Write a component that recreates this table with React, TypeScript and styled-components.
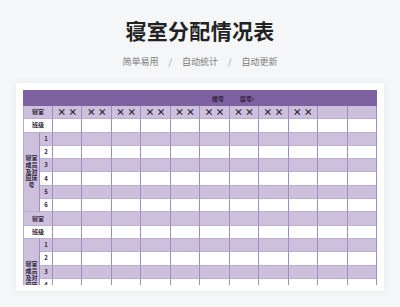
import React from "react";
import styled, { createGlobalStyle } from "styled-components";

const GlobalStyle = createGlobalStyle`
  html, body {
    margin: 0;
    padding: 0;
    background: #f5f6f8;
    font-family: "Noto Sans CJK SC", "Noto Sans", "Liberation Sans", sans-serif;
  }
  * { box-sizing: border-box; }
`;

const Page = styled.div`
  width: 400px;
  height: 307px;
  overflow: hidden;
  display: flex;
  flex-direction: column;
  align-items: center;
`;

const Title = styled.h1`
  margin: 18px 0 0;
  font-size: 21px;
  line-height: 24px;
  font-weight: 700;
  color: #222222;
  letter-spacing: 0.3px;
`;

const Subtitle = styled.div`
  margin-top: 14px;
  height: 12px;
  display: flex;
  align-items: center;
  gap: 10px;
  font-size: 9px;
  line-height: 12px;
  color: #7a7a7a;
`;

const Sep = styled.span`
  color: #9a9a9a;
`;

const Card = styled.div`
  margin-top: 15px;
  width: 368px;
  background: #ffffff;
  padding: 7px 7px 6px;
  box-shadow: 0 0 6px rgba(40, 40, 60, 0.07);
`;

const TableClip = styled.div`
  height: 195px;
  overflow: hidden;
`;

const HeaderBar = styled.div`
  height: 16px;
  background: #7e61a1;
  display: flex;
  align-items: center;
  padding-left: 189px;
  gap: 16px;
  font-size: 6px;
  font-weight: 700;
  color: #2b2038;
`;

const Grid = styled.div`
  display: grid;
  grid-template-columns: 16px 13px repeat(11, 1fr);
  grid-auto-rows: 13.3px;
  border-left: 1px solid #b9aacd;
`;

type Tone = "purple" | "white";

const Cell = styled.div<{ $tone: Tone; $span?: number; $rows?: number; $big?: boolean }>`
  grid-column: span ${(p) => p.$span ?? 1};
  grid-row: span ${(p) => p.$rows ?? 1};
  background: ${(p) => (p.$tone === "purple" ? "#cdc0dd" : "#ffffff")};
  border-right: 1px solid #a08cbe;
  border-bottom: 1px solid #bcaed0;
  display: flex;
  align-items: center;
  justify-content: center;
  font-size: ${(p) => (p.$big ? "9px" : "6px")};
  font-weight: ${(p) => (p.$big ? 900 : 700)};
  color: #2e2638;
  line-height: 1;
  white-space: nowrap;
`;

const LabelText = styled.div`
  display: flex;
  flex-direction: column;
  align-items: center;
  font-size: 6px;
  font-weight: 700;
  color: #2e2638;
`;

const LabelLine = styled.span`
  display: block;
  height: 6.8px;
  line-height: 6.8px;
  white-space: nowrap;
`;

const COLS = 11;
const LABEL_LINES = ["寝室", "成员", "及对", "应床", "号"];

function Block({ marks }: { marks: boolean }) {
  const cells: React.ReactNode[] = [];
  cells.push(
    <Cell key="dorm" $tone="purple" $span={2}>
      寝室
    </Cell>
  );
  for (let i = 0; i < COLS; i++) {
    cells.push(
      <Cell key={`d${i}`} $tone="purple" $big>
        {marks && i < 9 ? "× ×" : ""}
      </Cell>
    );
  }
  cells.push(
    <Cell key="cls" $tone="white" $span={2}>
      班级
    </Cell>
  );
  for (let i = 0; i < COLS; i++) {
    cells.push(<Cell key={`c${i}`} $tone="white" />);
  }
  cells.push(
    <Cell key="label" $tone="purple" $rows={6}>
      <LabelText>
        {LABEL_LINES.map((l) => (
          <LabelLine key={l}>{l}</LabelLine>
        ))}
      </LabelText>
    </Cell>
  );
  for (let r = 1; r <= 6; r++) {
    const tone: Tone = r % 2 === 1 ? "purple" : "white";
    cells.push(
      <Cell key={`n${r}`} $tone={tone}>
        {r}
      </Cell>
    );
    for (let i = 0; i < COLS; i++) {
      cells.push(<Cell key={`m${r}-${i}`} $tone={tone} />);
    }
  }
  return <>{cells}</>;
}

export default function App() {
  return (
    <Page>
      <GlobalStyle />
      <Title>寝室分配情况表</Title>
      <Subtitle>
        <span>简单易用</span>
        <Sep>/</Sep>
        <span>自动统计</span>
        <Sep>/</Sep>
        <span>自动更新</span>
      </Subtitle>
      <Card>
        <TableClip>
          <HeaderBar>
            <span>楼号</span>
            <span>层号:</span>
          </HeaderBar>
          <Grid>
            <Block marks />
            <Block marks={false} />
          </Grid>
        </TableClip>
      </Card>
    </Page>
  );
}
